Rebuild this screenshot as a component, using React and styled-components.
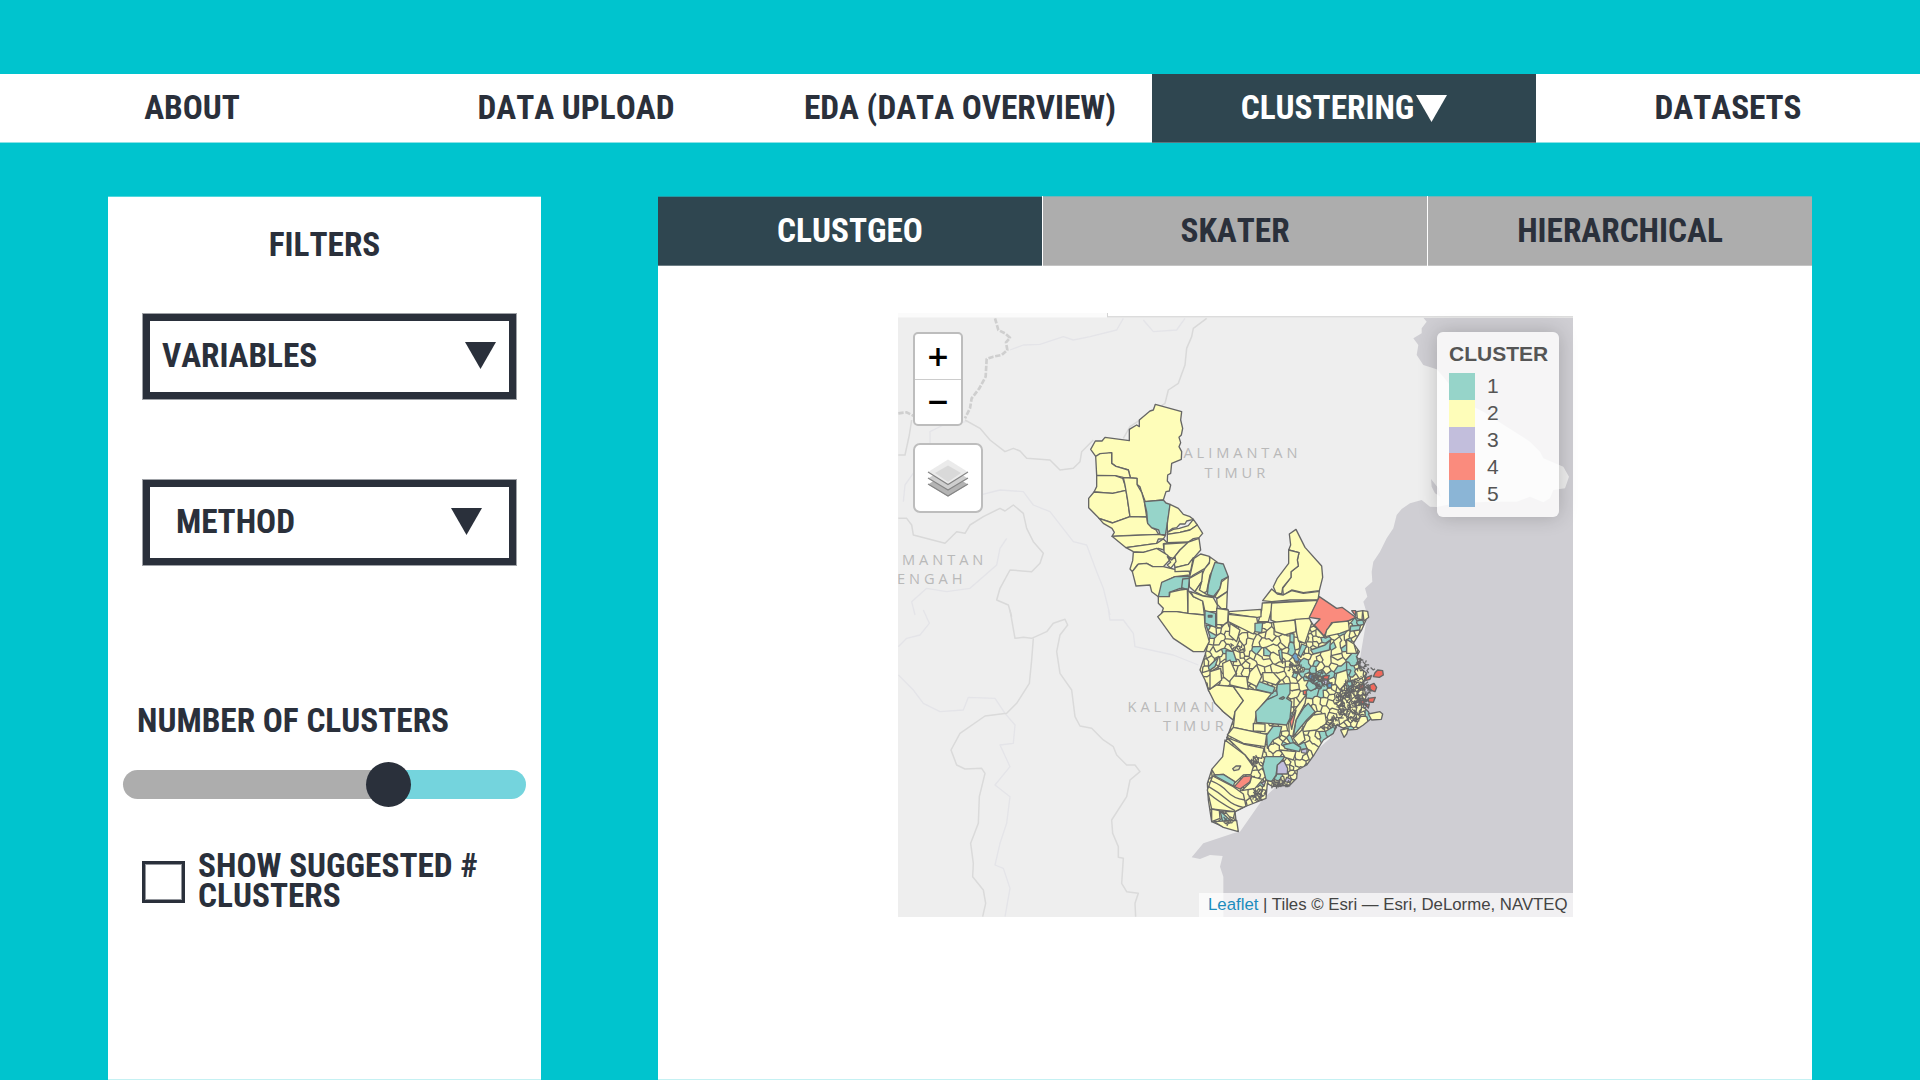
import React from "react";
import styled, { createGlobalStyle, css } from "styled-components";

const INK = "#2a303b";
const SLATE = "#2f4650";
const CYAN = "#00c4ce";
const GREY = "#adadad";

const TEAL = "#96d4c9";
const YELLOW = "#fefdb9";
const PURPLE = "#c2bedc";
const RED = "#fa8b7d";
const BLUE = "#8bb5d6";

const GlobalStyle = createGlobalStyle`
  *, *::before, *::after { box-sizing: border-box; }
  html, body { margin: 0; padding: 0; background: ${CYAN}; overflow: hidden; }
`;

const Page = styled.div`
  width: 1920px;
  height: 1080px;
  padding-top: 74px;
  display: flex;
  flex-direction: column;
  background: ${CYAN};
  font-family: "Roboto Condensed", Roboto, sans-serif;
  color: ${INK};
  overflow: hidden;
`;

const heading = css`
  font-size: 33.3px;
  font-weight: 700;
  font-stretch: 75%;
  font-kerning: none;
  line-height: 30px;
  white-space: nowrap;
`;

const Text = styled.span`
  ${heading}
  display: block;
`;

const Nav = styled.nav`
  display: grid;
  grid-template-columns: repeat(5, 384px);
  height: 69px;
  flex: none;
  background: #fff;
`;

const NavItem = styled.a`
  display: flex;
  align-items: center;
  justify-content: center;
  gap: 2px;
  border-bottom: 1px solid ${(p) => (p.$active ? "#5b7780" : "#8ce2e6")};
  background: ${(p) => (p.$active ? SLATE : "transparent")};
  color: ${(p) => (p.$active ? "#fff" : INK)};
`;

const Caret = styled.svg.attrs({ viewBox: "0 0 31 27", width: 31, height: 27, "aria-hidden": true })`
  display: block;
  flex: none;
  fill: ${(p) => p.$color || INK};
`;

const Down = ({ color }) => (
  <Caret $color={color}>
    <path d="M0 0H31L15.5 27Z" />
  </Caret>
);

const Main = styled.main`
  display: grid;
  grid-template-columns: 433px 1154px;
  column-gap: 117px;
  padding: 53px 0 0 108px;
  height: 937px;
`;

const Panel = styled.section`
  background: #fff;
  height: 884px;
  border-bottom: 1px solid #c5f1f3;
`;

const Filters = styled(Panel)`
  display: flex;
  flex-direction: column;
  border-top: 1px solid #4fd7dd;
`;

const FiltersTitle = styled.div`
  display: flex;
  justify-content: center;
  padding: 33px 0 54px;
`;

const Select = styled.div`
  display: flex;
  align-items: center;
  justify-content: space-between;
  width: 373px;
  height: 85px;
  margin: 0 0 81px 35px;
  padding: 0 ${(p) => p.$right}px 2px ${(p) => p.$left}px;
  border: 7px solid ${INK};
  box-shadow: 0 0 0 1px rgba(42, 48, 59, 0.45);
`;

const SliderLabel = styled.div`
  padding: 60px 0 34px 29px;
`;

const Track = styled.div`
  display: flex;
  align-items: center;
  width: 403.5px;
  height: 29px;
  margin-left: 14.6px;
  border-radius: 15px;
  background: linear-gradient(90deg, ${GREY} 0 267px, #74d4dd 267px);
`;

const Knob = styled.div`
  width: 45px;
  height: 45px;
  margin-left: 243.8px;
  border-radius: 50%;
  background: ${INK};
`;

const CheckRow = styled.label`
  display: flex;
  align-items: center;
  gap: 13px;
  padding: 52px 0 0 34px;
`;

const Box = styled.span`
  width: 43px;
  height: 42px;
  margin-top: 2px;
  border: 3px solid ${INK};
  box-shadow: inset 0 0 0 1px rgba(42, 48, 59, 0.5);
`;

const Tabs = styled.div`
  display: grid;
  grid-template-columns: repeat(3, 1fr);
  column-gap: 1px;
  height: 70px;
`;

const Tab = styled.button`
  display: flex;
  align-items: center;
  justify-content: center;
  border: 0 solid ${(p) => (p.$active ? "#6d7e85" : "#c4c4c4")};
  border-width: 0 0 1px;
  box-shadow: inset 0 1px 0 ${(p) => (p.$active ? "#239aa4" : "#75b4b7")};
  padding: 0;
  font-family: inherit;
  background: ${(p) => (p.$active ? SLATE : GREY)};
  color: ${(p) => (p.$active ? "#fff" : INK)};
`;

const MapFrame = styled.div`
  position: relative;
  width: 675px;
  height: 604px;
  margin: 47px 0 0 240px;
  font-family: "Liberation Sans", Arial, sans-serif;
`;

const MapSvg = styled.svg`
  display: block;
`;

const ZoomBox = styled.div`
  position: absolute;
  left: 15px;
  top: 19px;
  width: 50px;
  height: 94px;
  display: grid;
  grid-template-rows: 1fr 1fr;
  border: 2px solid #bdbdbd;
  border-radius: 5px;
  background: #fff;
`;

const ZoomButton = styled.span`
  display: flex;
  align-items: center;
  justify-content: center;
  font: bold 28px/30px "DejaVu Sans", sans-serif;
  color: #000;
  & + & {
    border-top: 1px solid #ccc;
  }
`;

const LayersBox = styled.div`
  position: absolute;
  left: 15px;
  top: 130px;
  width: 70px;
  height: 70px;
  display: flex;
  align-items: center;
  justify-content: center;
  border: 2px solid #bdbdbd;
  border-radius: 7px;
  background: #fff;
`;

const Legend = styled.div`
  position: absolute;
  left: 539px;
  top: 19px;
  width: 122px;
  height: 185px;
  padding: 12px 12px 0;
  border-radius: 6px;
  background: rgba(255, 255, 255, 0.8);
  box-shadow: 0 0 20px rgba(0, 0, 0, 0.2);
  color: #555;
`;

const LegendTitle = styled.div`
  font-size: 21px;
  font-weight: 700;
  line-height: 20px;
  padding-bottom: 9px;
`;

const LegendRow = styled.div`
  display: flex;
  align-items: center;
  gap: 12px;
  height: 26.8px;
  font-size: 21px;
  line-height: 24px;
  &::before {
    content: "";
    width: 26px;
    height: 26.8px;
    background: ${(p) => p.$color};
  }
`;

const Attribution = styled.div`
  position: absolute;
  right: 0;
  bottom: 0;
  width: 374px;
  height: 24px;
  padding-left: 9px;
  background: rgba(255, 255, 255, 0.7);
  font-size: 16.8px;
  line-height: 24px;
  white-space: nowrap;
  color: #444;
  b {
    font-weight: 400;
    color: #1b8cbd;
  }
`;

/* ---------- map geometry ---------- */

const SEA =
  "580,38 590,50 575,70 575,85 550,100 565,120 560,150 580,180 620,193 640,215 700,290 760,320 830,365 900,410 930,440 940,460 1000,485 1017,515 1005,550 970,555 960,580 940,592 900,575 860,590 780,590 700,594 650,600 620,606 600,605 575,585 540,595 515,612 500,630 490,670 470,700 450,740 430,770 425,800 427,830 405,850 412,875 400,890 412,930 390,1060 300,1300 100,1480 30,1580 10,1585 -80,1615 -115,1657 -90,1662 -60,1650 -22,1653 -30,1685 -20,1715 -20,1840 1032,1840 1032,38";

const BORDERS_NORTH = [
  "225,345 270,370 300,405 345,440 370,430 390,438 410,460 480,465 510,495 550,490 570,470 575,440 610,405",
  "950,40 910,70 905,95 890,130 885,180 865,235 835,255 825,295 720,365 700,400",
  "25,640 50,640 65,660 70,690 165,715 200,680 225,685 240,660 280,635 330,610 345,618 370,600 400,625 410,670 430,710 460,745 450,775 425,800 360,795 330,850 320,885 355,900 365,935",
  "25,450 45,450 58,390 65,345",
];
const BORDERS_SOUTH = [
  "360,0 375,85 400,82 425,85 470,65 490,40 525,28 533,45 510,75 500,125 510,190 545,240 555,320 570,348 605,355 640,390 670,410 680,435 710,465 735,465 750,485 720,510 710,560 665,630 668,670 685,710 685,742 700,745 695,820 710,845 745,850 735,880 737,920",
  "430,85 425,150 418,220 380,280 350,310 285,318 210,370 183,420 200,465 225,477 275,475 285,490 268,560 265,640 242,700 250,760 248,800 280,840 287,880 278,920",
];
const RIVERS_NORTH = [
  "360,135 400,120 450,118 520,95 550,105 600,95 680,75 700,40",
  "760,45 790,80 860,75 885,40",
  "120,415 120,380 160,360 230,350",
  "40,590 45,540 80,490 M230,580 330,555 400,560 430,600 480,620 550,710 590,720 620,800 640,850 660,930",
  "75,930 65,890 110,850 170,860 240,850 320,780 330,730 350,700",
];
const RIVERS_SOUTH = [
  "25,195 70,240 100,280 150,305 220,300 235,262 315,265 345,310 375,345 370,400 330,405 360,470 315,525 360,560 350,640 330,700 315,765 340,775 360,835 345,920",
  "100,0 118,40 90,75 50,85 25,110",
  "655,0 660,30 700,30 730,70 735,110 850,135 925,165",
];

/* districts of the north-western arm */
const NORTH = [
  ["y", "226,28 305,50 302,75 308,100 304,120 297,127 302,143 297,155 305,170 304,193 275,205 272,235 263,240 262,258 272,270 268,288 258,290 250,315 196,320 185,292 180,275 171,268 171,250 151,248 145,225 108,214 95,205 95,173 47,184 32,163 46,138 66,138 75,127 148,137 148,103 170,90 178,95 178,75 210,48 220,45"],
  ["y", "47,184 60,176 95,173 95,205 108,214 145,225 151,248 130,247 105,242 50,241"],
  ["y", "50,241 105,242 128,250 135,270 138,286 98,295 42,291 50,275"],
  ["y", "42,291 98,295 138,286 142,310 150,365 98,384 57,370 26,338 26,310"],
  ["y", "130,248 171,250 171,268 185,292 193,320 200,366 150,365 142,310 135,270"],
  ["y", "57,370 98,384 150,365 200,366 203,385 215,398 228,405 236,418 130,422 96,424 103,412 96,400 70,385"],
  ["t", "193,320 250,315 258,324 270,328 268,350 262,385 256,420 240,418 236,405 215,398 203,385 200,350"],
  ["y", "270,328 295,340 310,358 330,365 340,373 320,378 315,387 300,387 290,398 278,400 262,412 262,385"],
  ["y", "262,412 280,403 298,400 325,392 340,373 352,390 330,405 300,412 262,418"],
  ["y", "262,418 300,412 330,405 352,390 368,415 357,428 340,431 325,441 262,443"],
  ["y", "96,424 236,418 256,422 250,432 235,432 230,445 138,458"],
  ["y", "138,458 230,445 250,432 262,443 250,447 252,465 235,460 190,472 160,470"],
  ["y", "252,447 325,443 300,465 280,490 262,485 252,470"],
  ["y", "325,441 357,430 362,465 340,490 325,508 285,518 280,490 300,465"],
  ["y", "160,472 190,472 230,460 262,480 272,492 250,515 218,515 200,505 172,510 157,530 150,522 158,497"],
  ["y", "157,530 175,507 200,505 218,515 250,515 280,522 328,530 330,540 285,545 250,562 235,605 215,590 210,570 168,573"],
  ["y", "285,518 325,508 340,488 332,528 285,530"],
  ["y", "362,477 388,484 390,500 375,520 340,540 328,550 335,520 342,490"],
  ["y", "390,486 412,502 390,540 380,590 365,596 358,585 368,535 375,520 388,505"],
  ["t", "405,502 430,507 445,545 425,555 420,580 400,605 382,600 385,570 395,530"],
  ["y", "445,545 442,590 410,610 405,605 420,580 425,560"],
  ["y", "328,550 368,528 365,560 345,590 328,575"],
  ["y", "345,590 365,560 358,585 380,598 405,606 370,603"],
  ["t", "245,562 285,545 328,545 325,585 300,580 268,592 268,605 235,605"],
  ["t", "308,552 328,550 325,585 305,578"],
  ["y", "235,605 268,605 270,592 300,585 322,582 324,655 290,650 245,655 250,640 235,625"],
  ["y", "324,585 340,605 368,618 373,660 324,655"],
  ["y", "332,590 370,603 400,608 412,630 410,650 375,650 368,618 340,605"],
  ["y", "442,590 440,640 425,642 412,628 410,612"],
  ["y", "410,640 445,645 443,680 430,690 410,688"],
  ["y", "233,665 250,650 290,650 324,655 373,660 375,695 388,740 372,770 340,770 280,730"],
  ["t", "375,647 407,655 407,697 375,684"],
  ["g", "385,661 396,661 396,666 385,666"],
  ["y", "262,485 275,495 285,485 288,500 272,520 262,510 272,502"],
];

/* districts along the upper edge of the delta */
const MIDDLE = [
  ["y", "318,28 345,82 395,138 398,172 388,212 340,218 305,210 280,225 278,205 303,172 303,155 325,138 322,120 327,98 296,90 302,75 298,42"],
  ["y", "296,90 327,98 322,120 325,138 303,155 303,172 278,203 275,222 258,218 250,200 262,175 296,130"],
  ["y", "218,242 245,207 262,222 280,225 305,212 340,220 388,214 384,240 300,240 245,245"],
  ["y", "217,249 384,241 358,295 260,307 243,300 243,275 235,305 205,305 215,270"],
  ["y", "245,249 384,241 358,295 260,307 243,300 243,275"],
  ["r", "388,230 440,265 456,262 497,292 470,305 425,308 402,348 373,315 390,297 358,292"],
  ["y", "115,275 213,268 213,290 200,293 118,280"],
  ["y", "115,283 200,292 205,320 190,342 115,305"],
  ["y", "82,265 113,270 115,305 100,315 82,310"],
  ["y", "500,275 518,272 516,300 502,296"],
  ["y", "518,272 533,274 536,292 522,303"],
  ["r", "485,272 497,272 497,288"],
  ["t", "195,310 218,308 215,338 195,335"],
  ["t", "482,318 512,316 508,330 480,334"],
  ["y", "250,307 315,300 318,335 285,345 255,335"],
  ["y", "315,298 358,295 365,310 345,370 325,362 320,340"],
  ["y", "410,330 428,308 475,303 478,330 450,340 405,350"],
  ["t", "362,390 405,375 422,360 418,390 370,402"],
  ["t", "108,392 130,395 140,425 108,425"],
  ["t", "300,340 312,342 312,368 300,365"],
  ["t", "335,372 350,378 332,412 325,402"],
  ["t", "266,392 275,387 278,430 270,415"],
  ["t", "55,440 85,412 75,440 58,452"],
  ["y", "120,310 150,330 140,365 118,345"],
  ["y", "470,358 492,372 500,400 470,400"],
];

/* southern districts */
const SOUTH = [
  ["y", "55,150 80,135 130,140 160,182 135,215 130,240 100,215 75,190"],
  ["y", "130,140 200,150 245,160 200,215 190,275 130,262 135,215 160,182"],
  ["t", "260,150 262,133 300,130 300,160 290,175 305,185 300,235 290,255 200,247 197,215 230,180 262,165"],
  ["t", "200,122 255,142 248,160 198,148"],
  ["y", "218,98 250,98 270,120 258,135 220,122"],
  ["y", "180,95 200,75 215,110 200,140 172,125"],
  ["y", "60,95 92,85 95,120 60,148"],
  ["y", "118,95 135,108 170,110 175,148 120,135"],
  ["y", "98,70 120,60 138,100 118,125 100,110"],
  ["y", "130,262 190,275 230,283 225,320 160,310 112,285"],
  ["y", "110,292 160,312 222,325 215,355 190,350 190,375 165,345"],
  ["y", "105,300 165,345 190,380 183,403 160,405 135,428 100,403 75,405 65,388 98,350"],
  ["g2", "128,386 138,378 152,378 146,389 132,392"],
  ["r", "160,410 185,407 180,425 150,447 133,440"],
  ["t", "70,405 100,403 135,425 130,438"],
  ["y", "185,410 218,418 195,445 155,452 180,428"],
  ["y", "68,408 130,440 160,462 168,498 135,515 65,507 52,450"],
  ["y", "65,507 88,512 90,535 65,545"],
  ["t", "90,512 120,540 98,545"],
  ["y", "105,515 135,515 130,535 118,530"],
  ["y", "72,545 140,541 145,575 100,562"],
  ["t", "225,350 285,350 262,378 258,405 245,425 228,420 218,380"],
  ["p", "262,375 280,360 293,385 292,402 260,402"],
  ["p", "290,412 305,418 300,428 285,425"],
  ["p", "333,330 352,325 350,340 335,338"],
  ["p", "215,430 228,420 222,438"],
  ["t", "355,190 375,215 350,240 325,270 310,290 318,240 340,205"],
  ["y", "350,162 345,190 318,240 308,290 298,285 296,250 310,215"],
  ["r", "318,210 305,268 300,245"],
  ["y", "370,225 405,220 410,250 380,270 335,275 350,245"],
  ["t", "250,258 275,260 268,290 250,300 232,325 230,285"],
  ["y", "190,250 225,252 225,275 190,273"],
  ["t", "280,315 310,308 332,322 328,335 285,325"],
  ["y", "270,330 318,335 310,360 285,352"],
  ["y", "310,295 338,268 345,300 325,315"],
  ["t", "472,125 490,120 482,160 470,150"],
  ["y", "440,100 470,90 475,120 450,150 435,130"],
  ["R", "400,108 418,106 414,118 400,116"],
  ["R", "340,152 350,150 348,165 340,163"],
  ["R", "555,98 563,90 578,92 580,105 568,112 550,110"],
  ["R", "540,135 552,130 560,142 555,155 540,150"],
  ["R", "530,112 545,106 540,118 525,122"],
  ["R", "508,135 522,130 518,145 508,148"],
  ["R", "535,175 556,172 550,187 536,186"],
  ["R", "508,182 520,180 524,190 510,190"],
  ["R", "525,195 538,192 535,204"],
  ["p", "395,120 413,120 410,135 398,132"],
  ["B", "360,98 372,108 368,122 356,112"],
  ["B", "412,132 426,128 424,142 414,144"],
  ["y", "535,222 570,215 578,222 574,238 545,240"],
  ["y", "452,270 475,265 470,282 462,292"],
];

const STRIPES = [
  "M62,422Q95,435 112,455T165,480",
  "M56,440Q88,458 110,478T160,502",
  "M54,458Q85,485 135,512",
];

/* outer edge of the small-district mesh */
const MESH_EDGE =
  "45,45 30,90 45,120 55,150 100,215 130,240 112,290 105,320 95,365 65,390 52,430 55,480 65,545 100,560 140,560 135,515 170,498 228,475 232,430 248,440 268,438 300,435 320,415 322,390 350,375 372,345 400,300 430,280 440,255 455,262 470,270 500,268 520,255 545,235 535,215 520,200 528,170 520,130 530,100 512,85 505,70 500,50 508,35 490,10 515,-30 528,-60 497,-68 470,-55 425,-52 402,-12 370,-45 358,-62 250,-52 205,-55 190,-20 118,-60 110,-95 82,-95 80,-40 48,-45 60,-10";

function makeRandom(seed) {
  let s = seed;
  return () => {
    s = (s * 1664525 + 1013904223) % 4294967296;
    return s / 4294967296;
  };
}

const CENTRES = [
  [485, 170, 62],
  [375, 115, 48],
  [325, 75, 36],
  [205, 455, 34],
  [285, 425, 32],
  [415, 245, 30],
  [205, 375, 28],
  [520, 70, 28],
];

function density(x, y) {
  let d = 20;
  for (const [cx, cy, r] of CENTRES) {
    const k = Math.hypot(x - cx, y - cy) / r;
    if (k < 1) d = Math.min(d, 7 + 8 * k);
  }
  return d;
}

function makeSites() {
  const rnd = makeRandom(77);
  const sites = [];
  for (let i = 0; i < 5000; i++) {
    const x = 20 + rnd() * 560;
    const y = -110 + rnd() * 690;
    const d = density(x, y) * (0.35 + rnd() * 0.75);
    if (sites.every((s) => Math.hypot(s[0] - x, (s[1] - y) * 0.85) > d)) sites.push([x, y]);
  }
  return sites;
}

function cell(site, sites) {
  let poly = [
    [site[0] - 50, site[1] - 50],
    [site[0] + 50, site[1] - 50],
    [site[0] + 50, site[1] + 50],
    [site[0] - 50, site[1] + 50],
  ];
  for (const o of sites) {
    if (o === site) continue;
    const dx = o[0] - site[0];
    const dy = o[1] - site[1];
    if (Math.abs(dx) > 90 || Math.abs(dy) > 90) continue;
    const mx = (o[0] + site[0]) / 2;
    const my = (o[1] + site[1]) / 2;
    const side = (p) => (p[0] - mx) * dx + (p[1] - my) * dy;
    const next = [];
    for (let i = 0; i < poly.length; i++) {
      const a = poly[i];
      const b = poly[(i + 1) % poly.length];
      const sa = side(a);
      const sb = side(b);
      if (sa <= 0) next.push(a);
      if (sa < 0 !== sb < 0) {
        const t = sa / (sa - sb);
        next.push([a[0] + (b[0] - a[0]) * t, a[1] + (b[1] - a[1]) * t]);
      }
    }
    poly = next;
  }
  return poly;
}

/* Neighbouring cells are joined in pairs or triples, which gives long and
   bent districts; an edge is drawn only between two different districts. */
function buildMesh() {
  const rnd = makeRandom(5);
  const sites = makeSites();
  const polys = sites.map((s) => cell(s, sites));
  const group = sites.map((_, i) => i);
  const size = sites.map(() => 1);
  sites.forEach((s, i) => {
    if (rnd() > 0.72 || size[group[i]] > 1) return;
    const near = sites
      .map((o, j) => [Math.hypot(o[0] - s[0], o[1] - s[1]), j])
      .filter((e) => e[1] !== i && e[0] < 34 && group[e[1]] !== group[i] && size[group[e[1]]] < 3)
      .sort((a, b) => a[0] - b[0]);
    if (!near.length) return;
    const g = group[near[Math.min(near.length - 1, Math.floor(rnd() * 3))][1]];
    size[g] += 1;
    group[i] = g;
  });
  const fills = {};
  const edges = new Map();
  const cells = polys.map((poly, i) => {
    const g = group[i];
    if (!fills[g]) {
      const r = rnd();
      const town = Math.hypot(sites[g][0] - 360, sites[g][1] - 100) < 64;
      fills[g] = YELLOW;
      if (r < (town ? 0.42 : 0.11)) fills[g] = TEAL;
      else if (town && r < 0.49) fills[g] = "#6fa3cc";
    }
    for (let k = 0; k < poly.length; k++) {
      const a = poly[k];
      const b = poly[(k + 1) % poly.length];
      const key = `${Math.round(a[0] + b[0])}:${Math.round(a[1] + b[1])}`;
      if (!edges.has(key)) edges.set(key, { a, b, groups: new Set() });
      edges.get(key).groups.add(g);
      edges.get(key).count = (edges.get(key).count || 0) + 1;
    }
    return { fill: fills[g], pts: poly.map((p) => p.map((v) => v.toFixed(1)).join(",")).join(" ") };
  });
  const lines = [];
  edges.forEach(({ a, b, groups, count }) => {
    if (groups.size > 1 || count < 2)
      lines.push(`M${a[0].toFixed(1)},${a[1].toFixed(1)}L${b[0].toFixed(1)},${b[1].toFixed(1)}`);
  });
  return { cells, lines: lines.join("") };
}

function buildScribble() {
  const rnd = makeRandom(21);
  const out = [];
  const spots = [
    [485, 185, 40, 62, 160],
    [520, 75, 25, 18, 24],
    [378, 118, 26, 26, 50],
    [520, 150, 24, 42, 44],
    [268, 432, 24, 8, 28],
    [425, 250, 22, 22, 24],
    [315, 80, 20, 22, 22],
    [205, 462, 20, 14, 18],
    [115, 545, 20, 8, 10],
    [145, 22, 18, 8, 12],
    [200, 370, 14, 14, 10],
  ];
  for (const [cx, cy, rx, ry, n] of spots) {
    for (let i = 0; i < n; i++) {
      const a = rnd() * 6.283;
      const r = Math.sqrt(rnd());
      const x = cx + Math.cos(a) * rx * r;
      const y = cy + Math.sin(a) * ry * r;
      const p = () => (rnd() * 18 - 9).toFixed(1);
      out.push(`M${x.toFixed(1)},${y.toFixed(1)}l${p()},${p()}l${p()},${p()}`);
    }
  }
  return out.join("");
}

const MESH = buildMesh();
const SCRIBBLE = buildScribble();

const FILL = { y: YELLOW, t: TEAL, r: RED, R: "#f0695c", p: PURPLE, b: BLUE, B: "#5f9bcb", g: "#777", g2: "#e6e6b4" };

const Districts = ({ items }) =>
  items.map(([k, pts], i) => <polygon key={i} points={pts} fill={FILL[k]} />);

const Lines = ({ items, ...rest }) => (
  <g fill="none" strokeLinejoin="round" {...rest}>
    {items.map((d, i) => (
      <path key={i} d={`M${d}`} />
    ))}
  </g>
);

const at = (x, y) => `translate(${x} ${y}) scale(0.33333)`;

const PlaceName = styled.text`
  font-family: "Open Sans", "Noto Sans", sans-serif;
  font-size: 14.6px;
  letter-spacing: 3.95px;
  fill: #b9b9b9;
`;

const Base = () => (
  <MapSvg viewBox="898 313 675 604" width="675" height="604">
    <rect x="898" y="313" width="209" height="5" fill="#fbfbfb" />
    <rect x="898" y="317.5" width="676" height="599.5" fill="#eeeeee" />
    <g transform={at(1230, 305)}>
      <polygon points={SEA} fill="#cfced3" />
      <polygon points="603,522 625,550 632,575 615,565 605,545" fill="#cfced3" />
    </g>
    <Lines items={RIVERS_NORTH} transform={at(890, 305)} stroke="#e4e4e8" strokeWidth="4" />
    <Lines items={RIVERS_SOUTH} transform={at(890, 610)} stroke="#e4e4e8" strokeWidth="4" />
    <Lines items={BORDERS_NORTH} transform={at(890, 305)} stroke="#d9d9d9" strokeWidth="4.5" />
    <Lines items={BORDERS_SOUTH} transform={at(890, 610)} stroke="#dadada" strokeWidth="4.5" />
    <Lines
      items={["315,40 325,75 345,85 360,98 348,112 352,135 335,150 310,155 290,162 287,215 268,250 245,280 240,310 225,340", "25,325 50,322 75,335"]}
      transform={at(890, 305)}
      stroke="#cfcfcf"
      strokeWidth="8"
      strokeDasharray="16 5"
    />
    <PlaceName x="1170.5" y="458">KALIMANTAN</PlaceName>
    <PlaceName x="1204.5" y="477.5">TIMUR</PlaceName>
    <PlaceName x="1127.5" y="711.5">KALIMANTAN</PlaceName>
    <PlaceName x="1163" y="731">TIMUR</PlaceName>
    <PlaceName x="902" y="565">MANTAN</PlaceName>
    <PlaceName x="897" y="584">ENGAH</PlaceName>

    <clipPath id="delta">
      <polygon points={MESH_EDGE} />
    </clipPath>
    <g stroke="#666666" strokeWidth="4" strokeLinejoin="round">
      <g transform={at(1190, 640)}>
        <g clipPath="url(#delta)">
          {MESH.cells.map((c, i) => (
            <polygon key={i} points={c.pts} fill={c.fill} stroke={c.fill} strokeWidth="1" />
          ))}
          <path d={MESH.lines} fill="none" strokeLinecap="round" />
        </g>
        <polygon points={MESH_EDGE} fill="none" />
      </g>
      <g transform={at(1190, 520)}>
        <Districts items={MIDDLE} />
      </g>
      <g transform={at(1080, 395)}>
        <Districts items={NORTH} />
      </g>
      <g transform={at(1190, 640)}>
        <Districts items={SOUTH} />
        <path d={STRIPES.join("")} fill="none" />
        <path d={SCRIBBLE} fill="none" strokeWidth="3.6" />
        <path d="M268,176l12,-6l4,3l-6,5z" fill="#7fb5ac" />
      </g>
    </g>
    <rect x="1107" y="316" width="467" height="1.6" fill="#dcdcdc" />
    <rect x="1107" y="313" width="1" height="4" fill="#d4d4d4" />
  </MapSvg>
);

const LayersIcon = () => (
  <svg width="42" height="40" viewBox="0 0 42 40" aria-hidden="true">
    <path d="M1 26.5L21 14L41 26.5L21 38.5Z" fill="#b4b4b4" />
    <path d="M1 26L21 38L41 26" fill="none" stroke="#858585" strokeWidth="1.2" />
    <path d="M1 20.5L21 8L41 20.5L21 32.5Z" fill="#cfcfcf" />
    <path d="M1 20L21 32L41 20" fill="none" stroke="#858585" strokeWidth="1.2" />
    <path d="M1 14L21 1.5L41 14L21 26.5Z" fill="#ebebeb" />
    <path d="M8 15L21 7.5L34 15L21 24Z" fill="#d9d9d9" />
    <path d="M1 14L21 26.5L41 14" fill="none" stroke="#858585" strokeWidth="1.2" />
  </svg>
);

const CLUSTERS = [TEAL, YELLOW, PURPLE, RED, BLUE];

const ClusterMap = () => (
  <MapFrame>
    <Base />
    <ZoomBox>
      <ZoomButton>+</ZoomButton>
      <ZoomButton>−</ZoomButton>
    </ZoomBox>
    <LayersBox>
      <LayersIcon />
    </LayersBox>
    <Legend>
      <LegendTitle>CLUSTER</LegendTitle>
      {CLUSTERS.map((c, i) => (
        <LegendRow key={c} $color={c}>
          {i + 1}
        </LegendRow>
      ))}
    </Legend>
    <Attribution>
      <b>Leaflet</b> | Tiles © Esri — Esri, DeLorme, NAVTEQ
    </Attribution>
  </MapFrame>
);

export default function App() {
  return (
    <>
      <GlobalStyle />
      <Page>
        <Nav>
          <NavItem><Text>ABOUT</Text></NavItem>
          <NavItem><Text>DATA UPLOAD</Text></NavItem>
          <NavItem><Text>EDA (DATA OVERVIEW)</Text></NavItem>
          <NavItem $active>
            <Text>CLUSTERING</Text>
            <Down color="#fff" />
          </NavItem>
          <NavItem><Text>DATASETS</Text></NavItem>
        </Nav>
        <Main>
          <Filters>
            <FiltersTitle><Text>FILTERS</Text></FiltersTitle>
            <Select $left={12} $right={13}>
              <Text>VARIABLES</Text>
              <Down />
            </Select>
            <Select $left={26} $right={27}>
              <Text>METHOD</Text>
              <Down />
            </Select>
            <SliderLabel><Text>NUMBER OF CLUSTERS</Text></SliderLabel>
            <Track><Knob /></Track>
            <CheckRow>
              <Box />
              <Text>
                SHOW SUGGESTED #<br />
                CLUSTERS
              </Text>
            </CheckRow>
          </Filters>
          <Panel>
            <Tabs>
              <Tab $active><Text>CLUSTGEO</Text></Tab>
              <Tab><Text>SKATER</Text></Tab>
              <Tab><Text>HIERARCHICAL</Text></Tab>
            </Tabs>
            <ClusterMap />
          </Panel>
        </Main>
      </Page>
    </>
  );
}
